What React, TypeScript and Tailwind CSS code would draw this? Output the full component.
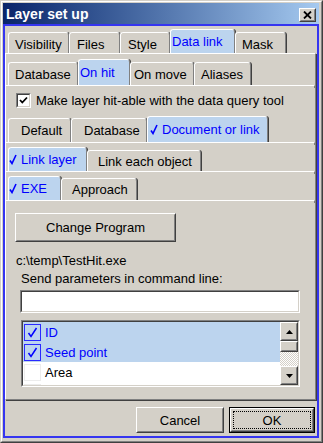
import React from 'react';

const FONT = "font-['Liberation_Sans',Arial,sans-serif]";

type TabProps = {
  label: string;
  w: number;
  h: number;
  sel?: boolean;
  check?: boolean;
  pl?: number;
  lift?: boolean;
};

function Check({ className }: { className?: string }) {
  return (
    <svg width="8" height="11" viewBox="0 0 8 11" className={className}>
      <path d="M1 6.5 L3 9.5 L7 1" fill="none" stroke="#0000ff" strokeWidth="1.6" />
    </svg>
  );
}

function Tab({ label, w, h, sel, check, pl = 6, lift }: TabProps) {
  return (
    <div
      style={{ width: w, height: h, paddingLeft: pl }}
      className={
        'flex items-center shrink-0 border-l border-t border-r border-t-white border-l-white border-r-[#808080] shadow-[1px_0_0_#404040] rounded-tl-[3px] rounded-tr-[3px] text-[13px] leading-none whitespace-nowrap ' +
        (sel ? 'bg-[#bcd4ee] text-[#0000ff]' : 'bg-[#d4d0c8] text-black') +
        (lift ? ' pt-[2px]' : '')
      }
    >
      {check && <Check className="mr-[4px] shrink-0" />}
      <span>{label}</span>
    </div>
  );
}

function PanelLine() {
  return <div className="h-[3px] border-t border-r border-t-white border-r-[#808080]" />;
}

function Raised({ className, children }: { className?: string; children?: React.ReactNode }) {
  return (
    <div className={'border border-t-white border-l-white border-r-[#404040] border-b-[#404040] bg-[#d4d0c8] ' + (className ?? '')}>
      <div className="w-full h-full border border-t-[#d4d0c8] border-l-[#d4d0c8] border-r-[#808080] border-b-[#808080] flex items-center justify-center">
        {children}
      </div>
    </div>
  );
}

function Sunken({ className, children }: { className?: string; children?: React.ReactNode }) {
  return (
    <div className={'border border-t-[#808080] border-l-[#808080] border-r-white border-b-white ' + (className ?? '')}>
      <div className="w-full h-full border border-t-[#404040] border-l-[#404040] border-r-[#d4d0c8] border-b-[#d4d0c8] bg-white flex">
        {children}
      </div>
    </div>
  );
}

function Arrow({ up }: { up?: boolean }) {
  return (
    <svg width="7" height="4" viewBox="0 0 7 4">
      <path d={up ? 'M0 4 L3.5 0 L7 4 Z' : 'M0 0 L3.5 4 L7 0 Z'} fill="#000" />
    </svg>
  );
}

const items = [
  { label: 'ID', on: true },
  { label: 'Seed point', on: true },
  { label: 'Area', on: false },
  { label: 'Length', on: false },
];

export default function App() {
  return (
    <div className={'w-[323px] h-[443px] bg-[#d4d0c8] ' + FONT}>
      <div className="w-full h-full border border-t-[#d4d0c8] border-l-[#d4d0c8] border-r-[#404040] border-b-[#404040]">
        <div className="w-full h-full border border-t-white border-l-white border-r-[#808080] border-b-[#808080] pt-[1px] pl-[1px] pr-[2px] pb-[3px] flex flex-col">
          {/* title bar */}
          <div className="h-[21px] shrink-0 flex items-center justify-between bg-gradient-to-r from-[#0a246a] to-[#a6caf0] pl-[3px] pr-[3px]">
            <span className="text-white font-bold text-[14px] leading-none">Layer set up</span>
            <Raised className="w-[17px] h-[14px] mt-[3px]">
              <svg width="9" height="8" viewBox="0 0 9 8">
                <path d="M1 0.5 L8 7.5 M8 0.5 L1 7.5" stroke="#000" strokeWidth="1.8" />
              </svg>
            </Raised>
          </div>

          {/* client */}
          <div className="flex-1 border-2 border-[#3535f0] flex flex-col">
            <div className="h-[24px] mt-[3px] pl-[3px] flex items-end">
              <Tab label="Visibility" w={61} h={21} pl={6} lift />
              <Tab label="Files" w={51} h={21} pl={7} lift />
              <Tab label="Style" w={50} h={21} pl={7} lift />
              <Tab label="Data link" w={65} h={24} sel pl={1} />
              <Tab label="Mask" w={51} h={21} pl={6} lift />
            </div>

            <div className="w-[311px] h-[347px] border border-t-white border-l-white border-r-[#808080] border-b-[#808080] shadow-[1px_1px_0_#404040] flex flex-col">
              <div className="h-[27px] mt-[4px] pl-[2px] flex items-end">
                <Tab label="Database" w={70} h={23} pl={6} />
                <Tab label="On hit" w={52} h={26} sel pl={1} />
                <Tab label="On move" w={64} h={23} pl={3} />
                <Tab label="Aliases" w={57} h={23} pl={6} />
              </div>
              <PanelLine />

              <div className="mt-[5px] h-[15px] flex items-center pl-[10px]">
                <div className="w-[15px] h-[15px] border border-t-[#808080] border-l-[#808080] border-r-white border-b-white">
                  <div className="w-full h-full border border-t-[#404040] border-l-[#404040] border-r-[#d4d0c8] border-b-[#d4d0c8] bg-white flex items-center justify-center">
                    <svg width="9" height="9" viewBox="0 0 9 9">
                      <path d="M1 4 L3.3 6.5 L8 1.5" fill="none" stroke="#000" strokeWidth="1.8" />
                    </svg>
                  </div>
                </div>
                <span className="ml-[5px] text-[13px] leading-none text-black">Make layer hit-able with the data query tool</span>
              </div>

              <div className="h-[26px] mt-[8px] pl-[2px] flex items-end">
                <Tab label="Default" w={63} h={24} pl={12} />
                <Tab label="Database" w={76} h={24} pl={12} />
                <Tab label="Document or link" w={121} h={26} sel check pl={2} />
              </div>
              <PanelLine />

              <div className="h-[24px] mt-[2px] pl-[2px] flex items-end">
                <Tab label="Link layer" w={79} h={24} sel check pl={0} />
                <Tab label="Link each object" w={114} h={21} pl={10} />
              </div>
              <PanelLine />

              <div className="h-[24px] mt-[2px] pl-[2px] flex items-end">
                <Tab label="EXE" w={53} h={24} sel check pl={0} />
                <Tab label="Approach" w={76} h={22} pl={10} />
              </div>
              <PanelLine />

              <Raised className="ml-[9px] mt-[10px] w-[161px] h-[29px]">
                <span className="text-[13px] leading-none text-black">Change Program</span>
              </Raised>

              <div className="ml-[10px] mt-[10px] h-[16px] flex items-center text-[13px] leading-none text-black">c:\temp\TestHit.exe</div>
              <div className="ml-[15px] mt-[2px] h-[16px] flex items-center text-[13px] leading-none text-black">Send parameters in command line:</div>

              <Sunken className="ml-[14px] mt-[4px] w-[280px] h-[23px]" />

              <Sunken className="ml-[15px] mt-[7px] w-[279px] h-[67px]">
                <div className="flex-1 overflow-hidden">
                  {items.map((it) => (
                    <div
                      key={it.label}
                      className={'h-[20px] flex items-center pl-[1px] ' + (it.on ? 'bg-[#bcd4ee]' : 'bg-white')}
                    >
                      <div
                        className={
                          'w-[17px] h-[17px] flex items-center justify-center ' +
                          (it.on ? 'border-[1.5px] border-[#2a2aff]' : 'border border-[#ececec] bg-white')
                        }
                      >
                        {it.on && (
                          <svg width="11" height="11" viewBox="0 0 11 11">
                            <path d="M1.5 6 L4 9.5 L9.5 1" fill="none" stroke="#0000ff" strokeWidth="1.5" />
                          </svg>
                        )}
                      </div>
                      <span className={'ml-[4px] text-[13px] leading-none ' + (it.on ? 'text-[#0000ff]' : 'text-black')}>
                        {it.label}
                      </span>
                    </div>
                  ))}
                </div>
                <div className="w-[18px] flex flex-col shrink-0">
                  <Raised className="h-[19px] w-full">
                    <Arrow up />
                  </Raised>
                  <Raised className="h-[11px] w-full" />
                  <div className="flex-1 bg-[repeating-conic-gradient(#ffffff_0_25%,#d4d0c8_0_50%)] bg-[length:2px_2px]" />
                  <Raised className="h-[19px] w-full">
                    <Arrow />
                  </Raised>
                </div>
              </Sunken>
            </div>

            <div className="mt-[7px] pr-[2px] flex justify-end gap-[5px]">
              <Raised className="w-[88px] h-[26px]">
                <span className="text-[13px] leading-none text-black">Cancel</span>
              </Raised>
              <div className="w-[86px] h-[26px] border border-black">
                <Raised className="w-full h-full">
                  <div className="w-[78px] h-[18px] border border-dotted border-black flex items-center justify-center">
                    <span className="text-[13px] leading-none text-black">OK</span>
                  </div>
                </Raised>
              </div>
            </div>
          </div>
        </div>
      </div>
    </div>
  );
}
